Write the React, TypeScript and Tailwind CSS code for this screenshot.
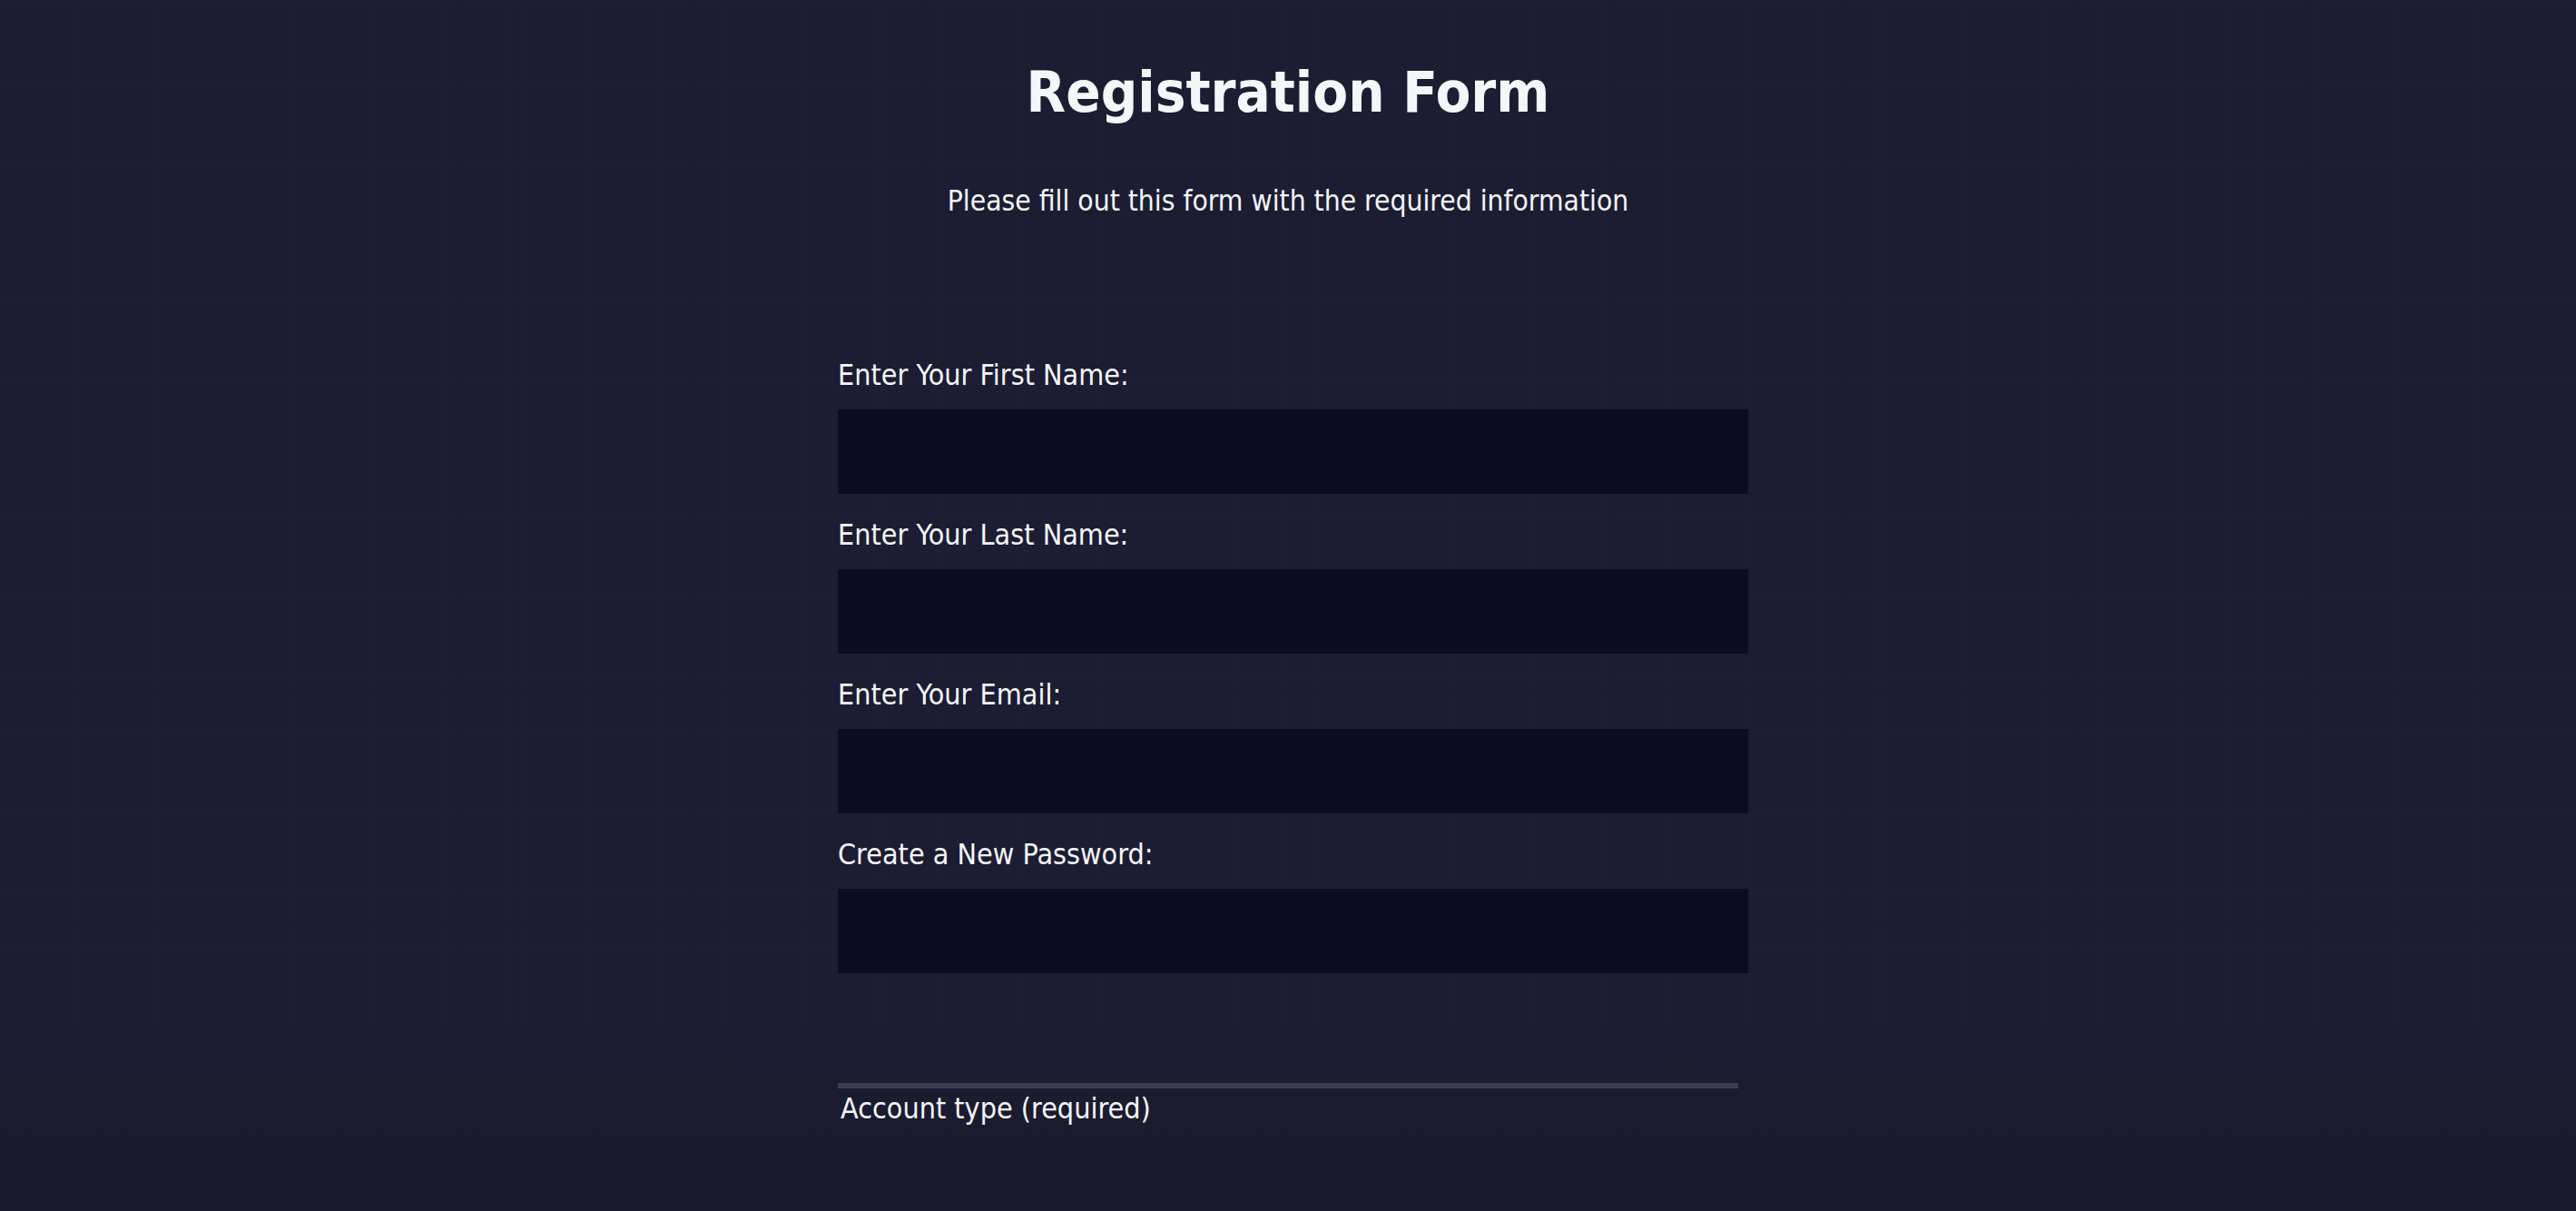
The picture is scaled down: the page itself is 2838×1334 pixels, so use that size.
import React from "react";

const fields = [
  { id: "first-name", label: "Enter Your First Name:", type: "text" },
  { id: "last-name", label: "Enter Your Last Name:", type: "text" },
  { id: "email", label: "Enter Your Email:", type: "email" },
  { id: "new-password", label: "Create a New Password:", type: "password" },
];

export default function App() {
  return (
    <div className="min-h-screen w-full bg-gradient-to-b from-[#1c1d32] via-[#1c1d32] via-85% to-[#1a1a2d] text-[#f5f6f8] font-['DejaVu_Sans_Condensed','DejaVu_Sans',sans-serif] [font-stretch:condensed]">
      {/* Header */}
      <header className="flex flex-col items-center pt-[70px]">
        <h1 className="text-[63px] leading-none font-bold">Registration Form</h1>
        <p className="mt-[73px] text-[31.5px] leading-none">
          Please fill out this form with the required information
        </p>
      </header>

      {/* Form */}
      <div className="flex justify-center pt-[159px]">
        <form className="w-[1014px] pl-[11px]">
          <div className="flex flex-col">
            {fields.map((f) => (
              <div key={f.id} className="flex flex-col pb-[29px]">
                <label htmlFor={f.id} className="text-[32px] leading-none">
                  {f.label}
                </label>
                <input
                  id={f.id}
                  type={f.type}
                  className="mt-[22px] h-[93px] w-[1003px] bg-[#0b0b22] outline-none"
                />
              </div>
            ))}
          </div>

          <div className="mt-[92px] w-[992px]">
            <div className="h-[6px] bg-[#3c3d51]" />
            <div className="mt-[6px] pl-[3px] text-[32px] leading-none">
              Account type (required)
            </div>
          </div>
        </form>
      </div>
    </div>
  );
}
